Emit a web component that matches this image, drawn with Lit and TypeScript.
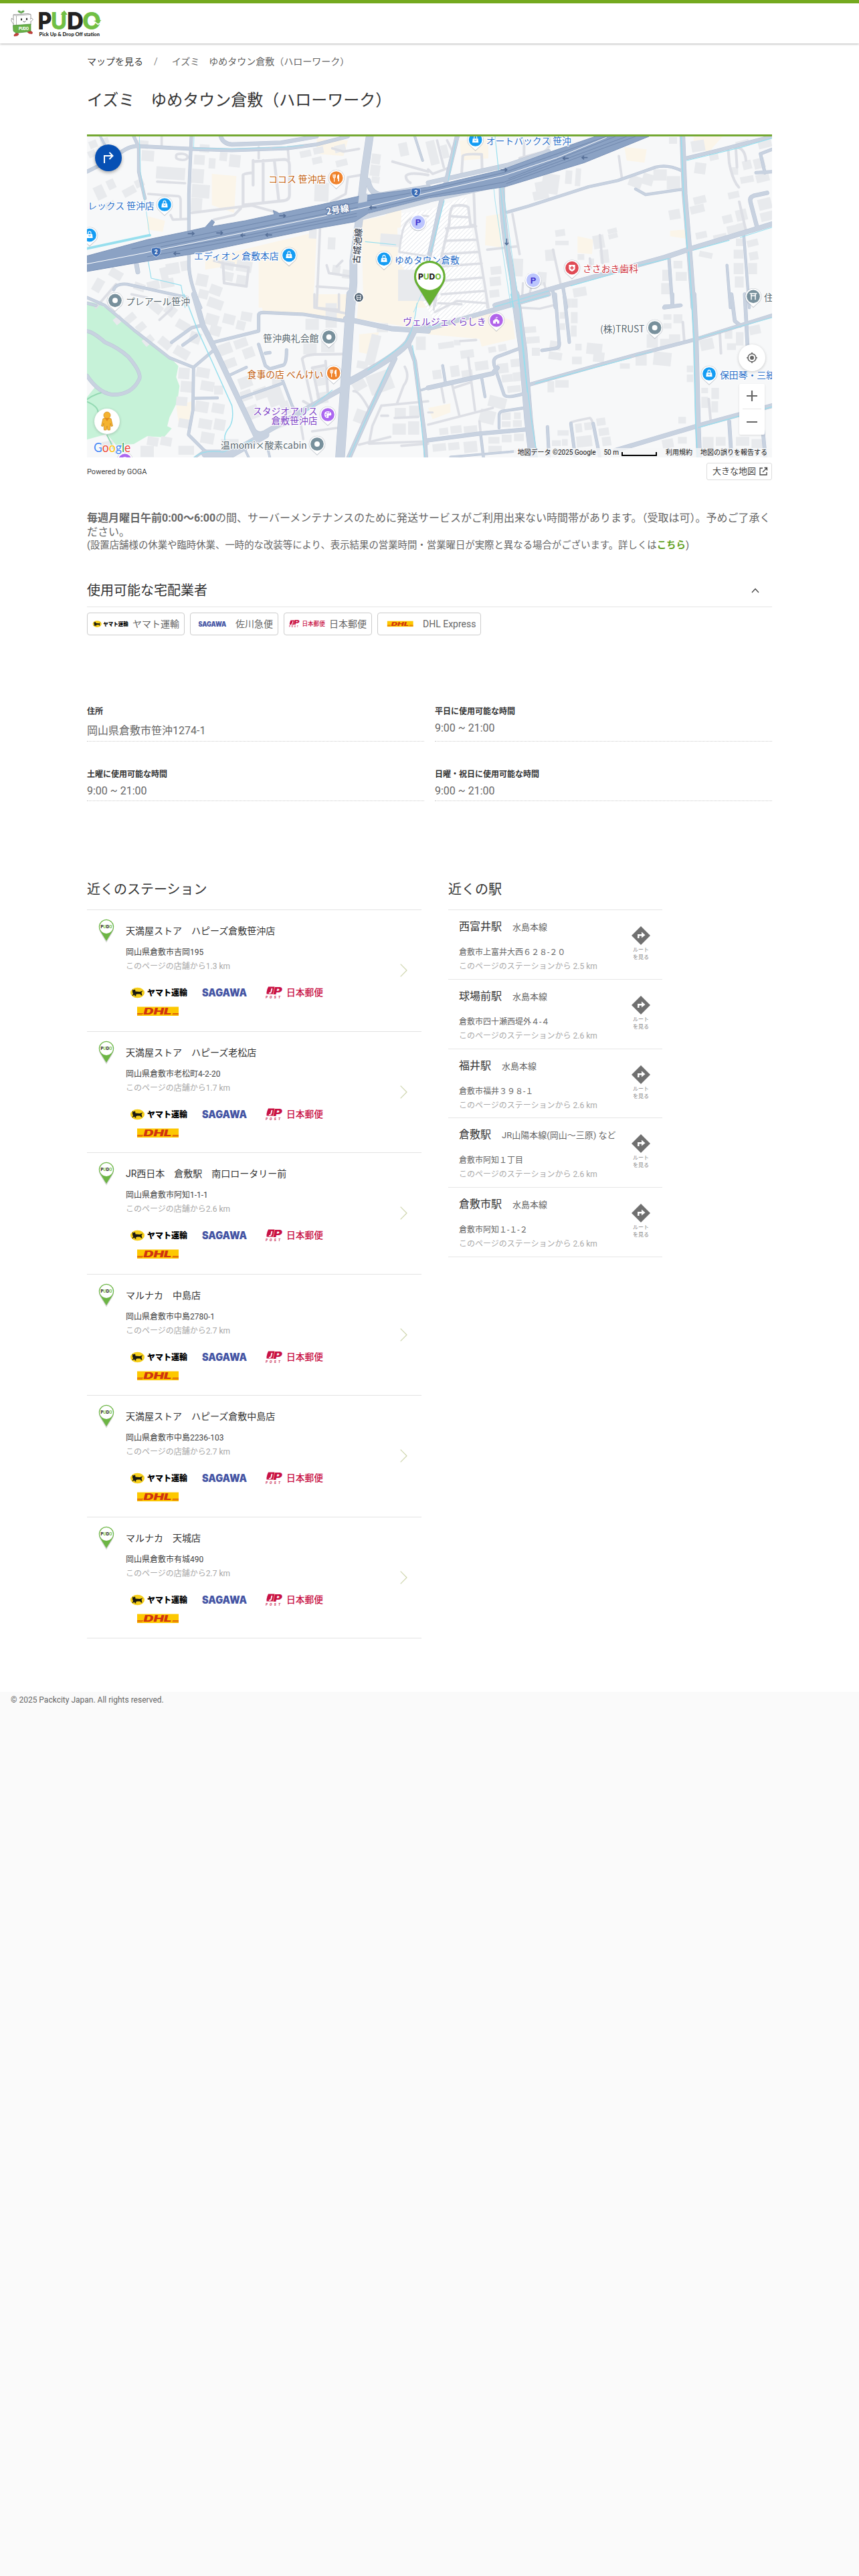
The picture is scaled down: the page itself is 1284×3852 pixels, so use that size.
import { LitElement, html, svg, css } from 'lit';
import { customElement, property } from 'lit/decorators.js';

const JP_FONT = css`Roboto, "Noto Sans CJK JP", sans-serif`;

// ---------------------------------------------------------------- data

const stores = [
    { name: '天満屋ストア　ハピーズ倉敷笹沖店', address: '岡山県倉敷市吉岡195', km: '1.3' },
    { name: '天満屋ストア　ハピーズ老松店', address: '岡山県倉敷市老松町4-2-20', km: '1.7' },
    { name: 'JR西日本　倉敷駅　南口ロータリー前', address: '岡山県倉敷市阿知1-1-1', km: '2.6' },
    { name: 'マルナカ　中島店', address: '岡山県倉敷市中島2780-1', km: '2.7' },
    { name: '天満屋ストア　ハピーズ倉敷中島店', address: '岡山県倉敷市中島2236-103', km: '2.7' },
    { name: 'マルナカ　天城店', address: '岡山県倉敷市有城490', km: '2.7' },
];

const trains = [
    { name: '西富井駅', line: '水島本線', address: '倉敷市上富井大西６２８-２０', km: '2.5' },
    { name: '球場前駅', line: '水島本線', address: '倉敷市四十瀬西堤外４-４', km: '2.6' },
    { name: '福井駅', line: '水島本線', address: '倉敷市福井３９８-１', km: '2.6' },
    { name: '倉敷駅', line: 'JR山陽本線(岡山～三原) など', address: '倉敷市阿知１丁目', km: '2.6' },
    { name: '倉敷市駅', line: '水島本線', address: '倉敷市阿知１-１-２', km: '2.6' },
];

const carriers = [
    { id: 'yamato', label: 'ヤマト運輸' },
    { id: 'sagawa', label: '佐川急便' },
    { id: 'jp', label: '日本郵便' },
    { id: 'dhl', label: 'DHL Express' },
];

// map tiles: every tile has its own origin, paths are [width, d]
// buildings are [x, y, w, h, angle]
type Tile = {
    dx: number;
    dy: number;
    areas: string[];
    buildings: number[][];
    lanes: [number, string][];
    roads: [number, string][];
    water: [number, string][];
};

const tiles: Tile[] = [
    {
        dx: -30,
        dy: -42,
        areas: [
            'M590 210L700 220L690 385L590 350Z',
            'M560 590L1060 470L1050 700L1040 810L800 810L800 600L560 640Z',
            'M1260 420L1420 385L1425 580L1560 600L1560 810L1270 810Z',
            'M1060 50L1200 60L1180 130L1060 120Z',
            'M300 400L380 420L370 470L300 460Z',
            'M1370 390L1440 370L1440 450L1370 460Z',
        ],
        buildings: [
            [340, 180, 130, 55, 4], [255, 60, 50, 36, 5], [275, 105, 56, 48, 4], [510, 125, 48, 44, 4],
            [535, 78, 44, 36, 4], [576, 140, 30, 46, 4], [500, 188, 54, 64, 4], [500, 258, 80, 60, 4],
            [496, 318, 50, 60, 4], [625, 112, 34, 40, 6], [668, 124, 50, 56, 6], [66, 262, 44, 62, -25],
            [120, 235, 36, 44, -25], [190, 270, 60, 36, -28], [245, 235, 40, 34, -24], [110, 335, 46, 30, -25],
            [40, 60, 36, 34, -22], [90, 50, 38, 26, -20], [35, 105, 34, 30, -25], [1050, 250, 64, 84, 2],
            [985, 105, 50, 30, -12], [1045, 90, 46, 30, -12], [1040, 135, 44, 30, -12], [1140, 80, 50, 32, -14],
            [1146, 146, 52, 30, -14], [1306, 120, 40, 46, 8], [1300, 170, 44, 50, 8], [1306, 222, 36, 30, 8],
            [1430, 70, 40, 60, -12], [1345, 480, 90, 56, 4], [1425, 640, 130, 140, 0], [385, 610, 60, 50, -10],
            [450, 600, 44, 44, -10], [360, 630, 32, 60, -14], [300, 690, 56, 40, -14], [360, 680, 60, 40, -10],
            [520, 660, 52, 54, 12], [580, 710, 54, 44, 20], [530, 730, 44, 40, 14], [630, 600, 60, 40, 12],
            [700, 600, 70, 50, 10], [640, 650, 46, 40, 12], [700, 665, 46, 44, 10], [390, 760, 50, 34, 6],
            [240, 700, 50, 34, 20], [130, 640, 60, 40, 30], [60, 680, 40, 60, 30], [1110, 495, 34, 54, 3],
            [1026, 450, 34, 50, 3], [1130, 620, 36, 40, 8], [1175, 640, 40, 40, 8],
        ],
        lanes: [
            [13, 'M775 150V260M775 155L915 145Q938 145 938 170V305Q938 325 915 330L730 350V215Q730 208 775 205M820 150V335M870 148L890 330'],
            [11, 'M430 130Q428 118 460 120Q485 124 480 140Q470 152 440 145Q428 142 430 130'],
            [11, 'M305 300L440 310Q450 312 450 330V410M480 412L415 415L405 395'],
            [12, 'M500 385L700 360L770 352L880 382M600 415L690 395L720 365'],
            [11, 'M345 245L470 252'],
            [11, 'M1125 335L1190 300L1200 225L1260 215M1130 95L1180 110L1250 98M800 90V140M930 90L935 145'],
            [12, 'M640 610L645 700L745 715L755 630L640 612'],
            [11, 'M1075 455L1060 810M1105 620L1115 655L1210 670M1150 625L1175 600M1060 715L1200 725'],
            [12, 'M1400 155L1560 200M1480 250Q1460 240 1460 220Q1470 200 1560 215'],
            [11, 'M160 705L70 810M600 600L640 610M365 42V90'],
            [9, 'M1440 500Q1450 380 1560 400M1440 490L1430 560L1560 580'],
        ],
        roads: [
            [16, 'M30 200L150 140Q200 90 250 85L500 98L680 104L930 95L1060 78L1200 42'],
            [18, 'M630 42Q640 75 680 78L900 70L1060 42'],
            [14, 'M240 42L262 90V200L290 320'],
            [14, 'M498 42L487 300V620Q490 700 540 810'],
            [10, 'M90 42L110 80'],
            [34, 'M1298 42L1275 200L1250 420L1225 600L1225 700L1215 810'],
            [24, 'M1560 270L1350 305Q1300 300 1290 240'],
            [20, 'M1250 410L1560 330'],
            [20, 'M250 605L258 650'],
            [11, 'M1500 42L1535 150'],
            [13, 'M150 730Q160 700 210 705L480 765M30 790L70 800'],
        ],
        water: [
            [3, 'M265 42L270 200L312 490'],
            [12, 'M30 545L312 485'],
            [4, 'M305 605L318 678L452 710L470 810'],
            [3, 'M510 42L508 95L680 98L850 92M860 94L1000 82'],
            [4, 'M1278 514L1415 528'],
        ],
    },
    {
        dx: 1530,
        dy: -42,
        areas: [
            'M140 60L270 50L270 140L150 150Z',
            'M260 400L320 390L330 540L255 530Z',
            'M670 490L740 505L735 570L670 565Z',
            'M1190 42L1320 42L1260 110L1190 100Z',
            'M880 90L980 100L970 160L890 150Z',
            'M1085 465L1150 460L1155 500L1085 490Z',
            'M0 620L140 600L150 810L0 810Z',
        ],
        buildings: [
            [510, 210, 76, 90, 8], [470, 285, 70, 40, -12], [615, 195, 30, 60, 4], [660, 185, 24, 80, 4],
            [480, 245, 50, 40, -10], [1180, 60, 60, 50, -10], [1080, 45, 36, 30, 0], [1195, 160, 50, 50, 8],
            [1260, 105, 40, 44, -12], [1190, 310, 56, 34, -14], [1175, 350, 64, 36, -14], [1080, 370, 50, 44, -10],
            [1340, 440, 60, 36, -12], [1280, 480, 60, 36, -12], [1200, 470, 50, 30, -12], [1215, 560, 60, 26, 12],
            [1320, 395, 44, 36, -14], [1380, 370, 50, 50, -14], [1385, 430, 40, 40, -14], [1345, 290, 50, 30, -12],
            [1360, 180, 30, 34, 0], [1400, 220, 60, 30, -10], [1470, 210, 60, 36, -14], [1460, 140, 50, 46, -14],
            [1410, 150, 40, 40, -14], [1480, 320, 60, 50, -14], [1490, 380, 60, 40, -14], [1480, 60, 60, 34, -14],
            [1380, 60, 60, 30, -14], [570, 460, 44, 30, -8], [570, 510, 60, 20, 0], [525, 550, 44, 50, -4],
            [805, 455, 42, 22, -14], [808, 478, 42, 22, -14], [740, 485, 50, 60, -10], [770, 550, 40, 60, -6],
            [900, 220, 60, 50, 20], [960, 210, 50, 50, 16], [1010, 190, 60, 50, 0], [1070, 220, 60, 60, 0],
            [375, 590, 50, 80, 2], [280, 625, 48, 36, -6], [276, 672, 50, 40, -6], [275, 730, 44, 34, -6],
            [450, 660, 34, 60, 4], [490, 650, 40, 60, 4], [650, 720, 60, 40, -10], [1050, 640, 40, 50, 0],
            [1100, 600, 40, 34, 0], [1110, 650, 50, 40, 0], [1045, 700, 40, 50, 0], [1380, 500, 40, 34, 0],
            [1430, 505, 50, 30, -14], [1370, 550, 44, 40, 0], [1440, 560, 40, 36, -10], [1370, 610, 44, 50, 0],
            [1435, 610, 40, 50, 0], [1375, 670, 40, 50, 0], [0, 60, 40, 110, -14], [60, 80, 30, 60, -14],
            [670, 570, 30, 26, 0], [720, 590, 24, 30, 0], [610, 770, 30, 40, 0],
        ],
        lanes: [
            [12, 'M150 210L155 130Q160 118 240 122L242 190M430 60L430 140M540 42Q555 90 520 110L410 140'],
            [12, 'M205 300L210 440L190 440L180 360Q160 345 110 355Q95 380 95 430L60 580L30 800'],
            [11, 'M100 400L185 405M80 455L215 445M75 510L220 505M65 570L230 560M55 625L240 612M60 690L245 675M60 750L255 735M210 440L270 810'],
            [11, 'M378 390L410 570M265 550L400 535'],
            [11, 'M855 130L868 225M560 550L595 710M770 485L782 610M725 590L730 630'],
            [12, 'M1345 95L1350 160Q1365 240 1393 270M1395 335L1425 465M1375 90Q1420 90 1425 150M1380 100L1385 180'],
            [11, 'M0 190L20 210L100 180M40 60L70 180M85 60L110 110'],
            [10, 'M420 790L425 700M520 700L530 740M455 745L470 690'],
        ],
        roads: [
            [20, 'M130 42L60 330L0 600'],
            [20, 'M0 250L360 170L540 110'],
            [18, 'M0 330L310 262'],
            [26, 'M330 262Q330 380 350 520L400 810'],
            [13, 'M355 382L450 355L720 268L850 240L1020 180Q1080 165 1145 200'],
            [12, 'M930 278L975 303L1150 278'],
            [24, 'M1140 42L1150 300L1170 540L1190 810'],
            [16, 'M1155 140L1300 105L1542 42'],
            [22, 'M1542 435L1460 460L1170 548L1060 585L600 712L300 800'],
            [14, 'M1490 120L1542 100M1490 120L1510 205M1470 205L1542 200'],
            [18, 'M1520 295L1460 308Q1440 315 1445 335L1475 450'],
            [14, 'M560 740L570 810M605 720L620 810M1080 590L1095 800'],
            [12, 'M1415 480L1440 810M1340 620L1355 810M1060 803L1135 800'],
        ],
        water: [
            [4, 'M300 42L380 810'],
            [3, 'M335 270L408 810'],
            [3, 'M288 210L300 330L372 810'],
            [5, 'M1135 42L1145 300L1162 545M1168 560L1185 810'],
            [4, 'M1160 150L1400 92L1542 50'],
            [4, 'M300 806L540 735M640 712L860 650M930 625L1080 590M1190 552L1350 508M1400 495L1542 450'],
            [4, 'M125 60L90 240M72 330L12 560'],
        ],
    },
    {
        dx: -30,
        dy: 708,
        areas: [
            'M800 0L1200 0L1190 110L820 80Z',
            'M1250 0L1510 0L1490 150L1240 110Z',
            'M1250 180L1340 170L1300 270L1250 260Z',
            'M430 500L500 480L490 570L440 570Z',
        ],
        buildings: [
            [200, 90, 50, 34, -40], [150, 100, 40, 30, -40], [250, 130, 44, 34, -40], [310, 40, 60, 40, 40],
            [380, 50, 50, 46, 40], [280, 190, 50, 34, -40], [350, 200, 60, 40, 40], [430, 120, 60, 40, 30],
            [420, 240, 70, 44, 30], [490, 170, 50, 50, 20], [560, 90, 60, 50, 16], [580, 140, 50, 46, 16],
            [640, 90, 54, 44, 14], [700, 120, 40, 40, 14], [570, 20, 70, 44, 20], [720, 80, 50, 40, 10],
            [690, 200, 60, 40, -20], [620, 220, 60, 50, -20], [730, 240, 50, 46, -20], [640, 290, 60, 40, -20],
            [520, 330, 60, 44, 10], [540, 390, 60, 44, 10], [600, 410, 40, 40, 0], [515, 480, 60, 50, 10],
            [590, 490, 56, 44, 10], [440, 330, 50, 50, 5], [450, 390, 54, 50, 5], [430, 460, 50, 40, 5],
            [440, 560, 60, 40, 10], [530, 560, 60, 44, 10], [600, 560, 50, 50, 10], [540, 620, 60, 50, 10],
            [720, 430, 50, 46, -20], [780, 420, 60, 50, -20], [840, 420, 70, 80, -20], [710, 370, 60, 50, -20],
            [740, 500, 60, 60, -20], [900, 480, 40, 60, -20], [860, 360, 40, 50, 0], [1010, 110, 60, 50, 0],
            [1100, 40, 50, 110, 0], [1000, 220, 60, 50, 0], [1080, 210, 60, 50, 0], [1050, 320, 50, 90, -10],
            [1060, 440, 50, 50, -10], [1290, 180, 44, 140, 14], [1240, 300, 50, 34, 10], [1220, 380, 60, 50, -30],
            [1290, 350, 110, 90, -20], [1230, 520, 60, 60, 20], [1400, 580, 60, 50, 0], [1410, 510, 50, 40, 0],
            [1475, 500, 50, 50, 0], [1470, 570, 50, 60, 0], [1505, 190, 44, 60, 0], [1330, 130, 50, 40, 0],
            [300, 640, 50, 40, 10], [360, 640, 50, 40, 10], [270, 680, 60, 50, 0], [440, 680, 70, 40, 0],
            [90, 660, 60, 40, -10], [630, 650, 80, 40, 0], [860, 560, 70, 40, -20],
        ],
        lanes: [
            [12, 'M1000 480L1035 500M995 290Q1000 275 1050 270L1180 268M995 290L1040 490M1040 330L1100 318M1040 330L1070 470M1100 300L1110 440'],
            [11, 'M1455 325Q1480 370 1450 410L1420 490M1350 500L1560 480M1350 500L1310 590L1295 670L1560 660M1350 545H1380M1410 555L1515 550M1440 680L1560 670M1250 675L1390 640'],
            [11, 'M1225 435Q1250 430 1300 525M1050 60L1160 70M1050 0V60L1190 85M1160 0V75'],
            [11, 'M415 40L410 65L355 115M230 0L300 15M960 550L985 560L1000 650M1040 615L1150 600'],
        ],
        roads: [
            [24, 'M510 0L550 140L610 260L700 450L790 640'],
            [14, 'M600 215L800 165V95Q800 82 820 82L1000 90L1190 120'],
            [13, 'M30 15L110 50L240 160L400 285L508 328L600 250'],
            [13, 'M508 328L505 520L485 630L560 705'],
            [14, 'M410 215L500 150L545 140M460 228L520 185'],
            [12, 'M665 365L745 328M720 465L905 400M510 467L615 465'],
            [14, 'M800 225L830 320L850 335L910 318Q925 315 925 250M830 265L850 262'],
            [12, 'M905 380L950 500L985 560'],
            [42, 'M1215 0L1195 300L1165 732'],
            [22, 'M1190 110L1400 155L1560 165'],
            [30, 'M1560 150L1500 155L1470 215Q1420 280 1200 395'],
            [22, 'M1190 415L1020 510L830 620Q790 640 770 600'],
            [34, 'M560 715L680 715L830 630'],
            [22, 'M1410 290L1290 540L1205 732'],
            [18, 'M1470 215L1500 300L1545 640L1550 732'],
            [16, 'M30 365Q80 440 140 450Q230 455 265 380Q275 350 215 280Q170 240 110 215Q60 170 30 165'],
            [10, 'M740 700L755 732M840 690L850 732M1530 430L1560 420M515 732L560 700'],
        ],
        water: [
            [5, 'M465 0L530 170L590 300L680 500Q690 560 670 595Q640 630 650 660'],
            [4, 'M510 732Q550 695 640 708L770 655M990 545L1130 430'],
            [4, 'M1510 40Q1490 210 1430 240Q1340 310 1290 340'],
            [4, 'M1490 230L1510 380L1535 640L1545 732M1380 330L1290 540L1205 732'],
            [3, 'M1530 0L1495 80'],
        ],
    },
    {
        dx: 1530,
        dy: 708,
        areas: [
            'M0 160L270 80L380 120L390 200L240 235L230 200L0 180Z',
            'M0 510L100 490L100 530L20 560Z',
        ],
        buildings: [
            [45, 215, 70, 28, -8], [115, 205, 30, 24, 0], [145, 250, 60, 36, -8], [270, 235, 34, 26, -10],
            [315, 225, 36, 30, -10], [430, 145, 54, 28, -4], [440, 190, 60, 30, -4], [465, 240, 36, 36, 0],
            [545, 210, 50, 40, 8], [540, 260, 60, 34, 8], [645, 280, 44, 34, 0], [660, 222, 28, 30, 0],
            [710, 220, 70, 50, 6], [740, 260, 50, 44, 6], [590, 80, 24, 30, 0], [590, 130, 24, 30, 0],
            [640, 20, 30, 40, 0], [640, 80, 30, 50, 0], [640, 140, 26, 50, 0], [980, 180, 50, 60, 0],
            [1010, 260, 80, 60, 6], [930, 270, 50, 50, 0], [1080, 180, 50, 50, 0], [1040, 200, 40, 40, 0],
            [1055, 90, 36, 24, 0], [1055, 130, 36, 24, 0], [1100, 90, 40, 40, 0], [1160, 320, 28, 30, 0],
            [1160, 360, 28, 34, 0], [1225, 420, 30, 24, 0], [1225, 460, 30, 50, 0], [1270, 420, 34, 50, 0],
            [1270, 480, 30, 50, 0], [1220, 200, 60, 50, -12], [1330, 160, 34, 40, 0], [1340, 220, 40, 30, 0],
            [1440, 140, 50, 40, -12], [1380, 170, 34, 60, 0], [310, 310, 50, 44, -6], [370, 290, 40, 36, -6],
            [330, 360, 50, 34, -6], [380, 350, 40, 40, -6], [355, 410, 60, 30, -6], [210, 300, 60, 40, -8],
            [150, 340, 50, 34, -8], [100, 320, 40, 50, -8], [20, 340, 40, 40, -8], [270, 460, 80, 50, 14],
            [230, 520, 70, 60, 14], [330, 530, 40, 34, 0], [385, 530, 30, 30, 0], [330, 570, 40, 26, 0],
            [380, 565, 40, 30, 0], [160, 590, 60, 34, -6], [100, 590, 50, 34, -6], [50, 600, 40, 30, -6],
            [20, 670, 60, 34, -6], [90, 665, 50, 34, -6], [160, 660, 60, 50, -6], [270, 640, 50, 30, 0],
            [330, 630, 44, 34, 0], [385, 625, 44, 34, 0], [270, 680, 60, 34, 0], [555, 655, 40, 26, 0],
            [600, 650, 26, 30, 0], [580, 610, 50, 24, 0], [660, 580, 30, 40, -6], [700, 575, 34, 34, -6],
            [665, 635, 70, 50, -6], [755, 555, 40, 34, -8], [765, 600, 46, 34, -8], [780, 640, 40, 40, -8],
            [1122, 550, 34, 30, 0], [1050, 650, 50, 40, -10], [1120, 640, 40, 30, 0], [1230, 640, 50, 50, 0],
            [1380, 640, 60, 40, 0], [1450, 650, 50, 40, 0], [1290, 640, 44, 40, 0], [860, 310, 44, 24, 0],
            [535, 390, 30, 50, 0], [570, 385, 60, 34, 0],
        ],
        lanes: [
            [11, 'M0 585L290 510M105 395L140 545M180 285L210 520M60 420L72 485M115 420L190 395'],
            [11, 'M230 570L235 620M640 575Q650 570 725 555Q735 560 740 590M145 210L215 205'],
            [12, 'M1142 125L1148 205M1308 175L1313 265M1258 470L1266 560'],
            [10, 'M30 80L130 30L260 40M45 40L150 45M410 60L500 65L560 50'],
            [9, 'M0 530H20M30 0L25 70M260 0L265 60'],
        ],
        roads: [
            [20, 'M0 155L380 45L540 0'],
            [38, 'M390 0L425 250L450 560L470 732'],
            [16, 'M445 408L750 322L930 272L1190 205L1542 95'],
            [20, 'M0 420L290 355L310 330'],
            [14, 'M405 245L310 280Q285 290 300 330L340 450Q350 470 430 445'],
            [14, 'M570 0L588 225Q588 240 570 243L510 252M610 0L633 215'],
            [18, 'M0 655L230 625L460 605'],
            [12, 'M430 510L330 525Q318 530 318 545V600M240 375L255 460M65 320L78 400M235 625L248 732'],
            [14, 'M535 595L542 732M640 580L660 732M740 580L770 732'],
            [20, 'M840 700L1210 590L1542 500'],
            [24, 'M1190 0L1200 200L1210 600L1215 732'],
            [16, 'M1360 0L1375 120L1400 140M1095 0V50M1058 60L1130 50M1420 0L1432 230'],
            [16, 'M1350 570L1360 732M1500 600L1512 732'],
            [10, 'M100 730L390 705'],
        ],
        water: [
            [4, 'M405 0L440 380L465 580L490 732M370 0L385 60'],
            [4, 'M480 400L910 285M1215 195L1542 105M1212 598L1542 505'],
            [5, 'M1180 0L1192 200L1200 585L1208 732'],
            [4, 'M400 42L540 4M410 120L445 440'],
            [3, 'M0 150L60 135M930 275L1005 258'],
        ],
    },
];

type Place = { x: number; y: number; kind: string; lines?: string[]; side?: 'l' | 'r' };

const places: Place[] = [
    { x: 1118, y: 186, kind: 'food', lines: ['ココス 笹沖店'], side: 'l' },
    { x: 348, y: 306, kind: 'shop', lines: ['レックス 笹沖店'], side: 'l' },
    { x: 12, y: 443, kind: 'shop' },
    { x: 906, y: 533, kind: 'shop', lines: ['エディオン 倉敷本店'], side: 'l' },
    { x: 1332, y: 550, kind: 'shop', lines: ['ゆめタウン倉敷'], side: 'r' },
    { x: 1742, y: 15, kind: 'shop', lines: ['オートバックス 笹沖'], side: 'r' },
    { x: 2175, y: 590, kind: 'health', lines: ['ささおき歯科'], side: 'r' },
    { x: 2988, y: 718, kind: 'shrine', lines: ['住'], side: 'r' },
    { x: 126, y: 736, kind: 'dot', lines: ['プレアール笹沖'], side: 'r' },
    { x: 1085, y: 900, kind: 'dot', lines: ['笹沖典礼会館'], side: 'l' },
    { x: 1106, y: 1062, kind: 'food', lines: ['食事の店 べんけい'], side: 'l' },
    { x: 1080, y: 1248, kind: 'art', lines: ['スタジオアリス', '倉敷笹沖店'], side: 'l' },
    { x: 1032, y: 1380, kind: 'dot', lines: ['温momi×酸素cabin'], side: 'l' },
    { x: 1836, y: 825, kind: 'castle', lines: ['ヴェルジェくらしき'], side: 'l' },
    { x: 2546, y: 858, kind: 'dot', lines: ['(株)TRUST'], side: 'l' },
    { x: 2790, y: 1065, kind: 'shop', lines: ['保田琴・三絃'], side: 'r' },
    { x: 170, y: 1453, kind: 'art' },
];

const kindColors: Record<string, [string, string]> = {
    food: ['#f0832c', '#c2600f'],
    shop: ['#149cf3', '#2b70c9'],
    health: ['#e04b55', '#d03742'],
    shrine: ['#78909c', '#56666e'],
    dot: ['#78909c', '#56666e'],
    art: ['#ac68f0', '#7b3fc4'],
    castle: ['#b164ea', '#7b3fc4'],
};

// ---------------------------------------------------------------- map

@customElement('station-map')
export class StationMap extends LitElement {
    static styles = css`
        :host {
            display: block;
            position: relative;
            height: 480px;
            border-top: 3px solid #74a832;
            overflow: hidden;
            font-family: ${JP_FONT};
        }
        .canvas {
            display: block;
            width: 1024px;
            height: 480px;
        }
        .label {
            font-family: "Noto Sans CJK JP", sans-serif;
            font-size: 41.5px;
            paint-order: stroke;
            stroke: #fff;
            stroke-width: 7px;
            stroke-linejoin: round;
        }
        .road-name {
            font-family: "Noto Sans CJK JP", sans-serif;
            font-size: 40px;
            font-weight: 500;
            paint-order: stroke;
            stroke-width: 8px;
            stroke-linejoin: round;
        }
        .road-name.highway {
            font-weight: 700;
        }
        .parking {
            font-family: Roboto, sans-serif;
            font-size: 40px;
            font-weight: 700;
        }
        .parking.shield {
            font-size: 26px;
        }
        .pin-text {
            font-family: Inter, sans-serif;
            font-weight: 800;
        }
        .google {
            font-family: Lato, sans-serif;
            font-size: 56px;
            paint-order: stroke;
            stroke: #fff;
            stroke-width: 6px;
            stroke-linejoin: round;
        }
        .round {
            position: absolute;
            width: 40px;
            height: 40px;
            border-radius: 50%;
            background: #fff;
            box-shadow: 0 1px 4px rgba(0, 0, 0, 0.2);
        }
        .round svg {
            display: block;
            width: 100%;
            height: 100%;
        }
        .route {
            left: 12px;
            top: 12px;
            background: #0750b4;
            box-shadow: 0 2px 5px rgba(0, 0, 0, 0.35);
        }
        .pegman {
            left: 11px;
            bottom: 35px;
            width: 38px;
            height: 38px;
        }
        .locate {
            right: 10px;
            top: 311px;
        }
        .zoom {
            position: absolute;
            right: 11px;
            top: 370px;
            width: 38px;
            height: 76px;
            border-radius: 2px;
            background: #fff;
            box-shadow: 0 1px 3px rgba(0, 0, 0, 0.12);
        }
        .legal {
            position: absolute;
            right: 0;
            bottom: 0;
            display: flex;
            align-items: center;
            height: 14px;
            padding: 0 7px 0 6px;
            background: rgba(245, 246, 248, 0.8);
            color: #111;
            font-size: 10px;
            line-height: 14px;
            white-space: nowrap;
        }
        .scale {
            width: 49px;
            height: 4px;
            margin: 3px 13px 0 4px;
            border: 2px solid #000;
            border-top: none;
        }
        .gap {
            margin-right: 12px;
        }
    `;

    glyph(kind: string) {
        switch (kind) {
            case 'food':
                return svg`<path d="M-14 -16v10q0 6 5 7v16M-9 -16v14M-4 -16v10q0 6-5 7" fill="none" stroke="#fff" stroke-width="3.5"/>
                    <path d="M4 -8q2-9 9-8v32h-5v-12h-4z" fill="#fff"/>`;
            case 'shop':
                return svg`<path d="M-12 -5h24l2 18h-28z" fill="#fff"/>
                    <path d="M-6 -5v-5q0-7 6-7t6 7v5" fill="none" stroke="#fff" stroke-width="3.5"/>
                    <path d="M-5 1q5 7 10 0" fill="none" stroke="#149cf3" stroke-width="3"/>`;
            case 'health':
                return svg`<path d="M-14 -14h28v16q0 8-14 14q-14-6-14-14z" fill="#fff"/>
                    <path d="M0 -9v17M-8 0h16" stroke="#e04b55" stroke-width="5"/>`;
            case 'shrine':
                return svg`<path d="M-16 -13h32M-12 -3h24M-9 -12v27M9 -12v27" stroke="#fff" stroke-width="4.5"/>`;
            case 'art':
                return svg`<path d="M-15 2q-2-16 14-17q16 0 17 14q0 6-8 5q-6 0-4 7q1 5-6 4q-12-2-13-13z" fill="#fff"/>
                    <g fill="#ac68f0"><circle cx="-8" cy="-1" r="3"/><circle cx="-3" cy="-8" r="3"/><circle cx="6" cy="-8" r="3"/><circle cx="-6" cy="7" r="2.6"/></g>`;
            case 'castle':
                return svg`<path d="M-15 14v-13h4l4-6h5v-9h10l-4 3h-4v6h5l4 6h4v13h-10v-8h-6v8z" fill="#fff"/>`;
            default:
                return svg`<circle r="12" fill="#fff"/>`;
        }
    }

    place(p: Place) {
        const [bg, fg] = kindColors[p.kind];
        const lines = p.lines ?? [];
        const left = p.side === 'l';
        return svg`
            <g transform=${`translate(${p.x} ${p.y})`}>
                <path d="M0 51L-22 30A37 37 0 1 1 22 30Z" fill="#5f6b7a" opacity=".35"/>
                <path d="M0 47L-22 27A35 35 0 1 1 22 27Z" fill="#fff"/>
                <circle r="29.5" fill=${bg}/>
                ${this.glyph(p.kind)}
                ${lines.map((t, i) => svg`<text class="label" fill=${fg} x=${left ? -46 : 48}
                    y=${20 + (i - (lines.length - 1) / 2) * 43} text-anchor=${left ? 'end' : 'start'}>${t}</text>`)}
            </g>`;
    }

    layer(draw: (t: Tile) => unknown) {
        return tiles.map((t) => svg`<g transform=${`translate(${t.dx} ${t.dy})`}>${draw(t)}</g>`);
    }

    strokes(list: [number, string][], color: string, extra = 0) {
        return list.map(([w, d]) => svg`<path d=${d} stroke=${color} stroke-width=${w + extra}/>`);
    }

    render() {
        return html`
            <svg class="canvas" viewBox="0 0 3072 1440">
                <defs>
                    <pattern id="hatch" width="14" height="14" patternUnits="userSpaceOnUse" patternTransform="rotate(-45)">
                        <path d="M0 7H14" stroke="#dde1e7" stroke-width="2"/>
                    </pattern>
                </defs>
                <rect width="3072" height="1440" fill="#f7f8f9"/>
                <path d="M0 740Q60 745 110 790L380 1000L410 1030L400 1080L415 1120L405 1190L370 1260L360 1300L380 1310L345 1350L270 1345L210 1380L130 1385L90 1335L0 1360V1170L40 1120L0 1080Z" fill="#c6f2d8"/>
                ${this.layer((t) => t.areas.map((d) => svg`<path d=${d} fill="#fbf5e9"/>`))}
                <path d="M1410 345L1530 330L1700 270L1790 780L1560 830L1400 560Z" fill="#fff"/>
                <path d="M1410 345L1530 330L1700 270L1790 780L1560 830L1400 560Z" fill="url(#hatch)"/>
                ${this.layer((t) => t.buildings.map(([x, y, w, h, a]) => svg`<rect x=${x} y=${y} width=${w} height=${h}
                    fill="#e8eaed" transform=${`rotate(${a} ${x + w / 2} ${y + h / 2})`}/>`))}
                <g fill="none" stroke-linecap="round" stroke-linejoin="round">
                    <path d="M0 1180Q40 1150 90 1145M0 1190Q50 1210 50 1240M90 1340L130 1420" stroke="#93d9b2" stroke-width="6"/>
                    ${this.layer((t) => this.strokes(t.lanes, '#dddfe5'))}
                    ${this.layer((t) => this.strokes(t.roads, '#b9c4d6', 1))}
                    ${this.layer((t) => this.strokes(t.roads, '#c8d2e0', -2))}
                    ${this.layer((t) => this.strokes(t.water, '#97dfee', -0.5))}
                </g>
                <path d="M0 536L270 463L450 426L530 408L560 374L572 384L560 404L710 378L840 350L835 332L862 345L1030 310L1220 268L1530 228L1860 150L2070 72L2280 0H2520L2230 118L1875 226L1530 276L1260 345L1200 383L1030 413L710 478L470 528L230 566L0 606Z"
                    fill="#8ba2c4" stroke="#7b93b8" stroke-width="3"/>
                <g fill="none" stroke="#7189ae" stroke-width="3">
                    <path d="M200 505L710 400L1220 295L1530 240L1870 162L2330 0"/>
                    <path d="M330 495L710 420L1215 318"/>
                    <path d="M270 540L710 458L1210 358M1260 330L1530 268L1870 205L2420 0"/>
                    <path d="M330 510L710 445L1210 345M1890 190L2370 0M1880 212L2460 0"/>
                </g>
                <path d="M1221 262L1258 256L1256 292L1216 300Z" fill="#c8d2e0"/>
                <path d="M0 572L230 528L710 430L1220 325L1530 253L1870 175L2110 95L2330 4" fill="none" stroke="#fff" stroke-width="3"/>
                <g fill="none" stroke="#566f97" stroke-width="5">
                    <path d="M452 436h28m-9-8l9 8l-9 8M580 433h28m-9-8l9 8l-9 8M862 356h28m-9-8l9 8l-9 8M710 443h-20m9-8l-9 8l9 8M830 442h-28m9-8l-9 8l9 8M418 525h-28m9-8l-9 8l9 8M1298 319h-30m9-8l-9 8l9 8M1855 150h28m-9-8l9 8l-9 8M2160 98h-25m9-8l-9 8l9 8M2245 95h-25m9-8l-9 8l9 8M1882 458v28m-8-9l8 9l8-9"/>
                </g>
                <text class="road-name highway" transform="translate(1075 351) rotate(-9)" fill="#fff" stroke="#5f7aa8">2号線</text>
                <text class="road-name" transform="translate(1222 572) rotate(-86)" fill="#3c4654" stroke="#fff">古城池線</text>
                ${[[310, 518], [1475, 251]].map(([x, y]) => svg`
                    <g transform=${`translate(${x} ${y})`}>
                        <path d="M-20 -16Q0 -24 20 -16Q26 14 0 23Q-26 14 -20 -16Z" fill="#3a6bb3" stroke="#e9effa" stroke-width="2"/>
                        <text class="parking shield" x="0" y="10" text-anchor="middle" fill="#fff">2</text>
                    </g>`)}
                <circle cx="1219" cy="722" r="21" fill="#46596b" stroke="#fff" stroke-width="4"/>
                <path d="M1210 712h18v18h-18zM1210 722h18M1213 730v5M1225 730v5" fill="none" stroke="#fff" stroke-width="3"/>
                ${[[1485, 385], [2001, 645]].map(([x, y]) => svg`
                    <circle cx=${x} cy=${y + 2} r="37" fill="#6c7687" opacity=".4"/>
                    <circle cx=${x} cy=${y} r="33" fill="#bcc5fd" stroke="#fff" stroke-width="5"/>
                    <text class="parking" x=${x} y=${y + 14} text-anchor="middle" fill="#4535cf">P</text>`)}
                ${places.map((p) => this.place(p))}
                <path d="M1537 766L1478 668A70 70 0 1 1 1596 668Z" fill="#5c6470" opacity=".3"/>
                <path d="M1537 760L1477 664A70 70 0 1 1 1597 664Z" fill="#66b032"/>
                <circle cx="1537" cy="628" r="61" fill="#fff"/>
                <text class="pin-text" x="1485" y="641" font-size="36" textLength="104" lengthAdjust="spacingAndGlyphs" fill="#222">P<tspan fill="#7ac143">U</tspan>D<tspan fill="#7ac143">O</tspan></text>
                <text class="google" x="30" y="1415" textLength="166" lengthAdjust="spacingAndGlyphs" fill="#4285f4">G<tspan fill="#ea4335">o</tspan><tspan fill="#fbbc04">o</tspan>g<tspan fill="#34a853">l</tspan><tspan fill="#ea4335">e</tspan></text>
            </svg>
            <div class="round route">
                <svg viewBox="0 0 40 40"><path d="M14 28V17H26M21.5 12L26.5 17L21.5 22" fill="none" stroke="#fff" stroke-width="2"/></svg>
            </div>
            <div class="round pegman">
                <svg viewBox="0 0 38 38">
                    <path d="M13 15Q19 12 25 15L27.5 26L25 26.500L24 22L23.500 32H20L19 26L18 32H14.500L14 22L13 26.500L10.500 26Z" fill="#f5b32f" stroke="#cf8a1b" stroke-width=".8"/>
                    <circle cx="19" cy="10" r="5" fill="#f5b32f" stroke="#cf8a1b" stroke-width=".8"/>
                    <path d="M15.500 14L19 19L22.500 14Z" fill="#e08a1e"/>
                </svg>
            </div>
            <div class="round locate">
                <svg viewBox="0 0 40 40">
                    <circle cx="20" cy="20" r="6" fill="none" stroke="#666" stroke-width="1.600"/>
                    <circle cx="20" cy="20" r="3" fill="#666"/>
                    <path d="M20 12V15M20 25V28M12 20H15M25 20H28" stroke="#666" stroke-width="1.600"/>
                </svg>
            </div>
            <div class="zoom">
                <svg viewBox="0 0 38 76" width="38" height="76">
                    <path d="M11 18H27M19 10V26M11 57H27" stroke="#666" stroke-width="2.200"/>
                    <path d="M5 37.500H33" stroke="#e6e6e6"/>
                </svg>
            </div>
            <div class="legal">
                <span class="gap">地図データ ©2025 Google</span>
                <span>50 m</span>
                <span class="scale"></span>
                <span class="gap">利用規約</span>
                <span>地図の誤りを報告する</span>
            </div>
        `;
    }
}

// ---------------------------------------------------------------- logos

@customElement('carrier-logo')
export class CarrierLogo extends LitElement {
    static styles = css`
        :host {
            display: block;
        }
        svg {
            display: block;
            width: 100%;
        }
        .jp {
            font-family: "Noto Sans CJK JP", sans-serif;
        }
        .heavy {
            font-family: Inter, "Liberation Sans", sans-serif;
            font-weight: 900;
        }
    `;

    @property() name = '';

    art() {
        switch (this.name) {
            case 'yamato':
                return svg`
                    <ellipse cx="11.500" cy="14.500" rx="10.500" ry="7.800" fill="#f6cf1b"/>
                    <path d="M4 9.500L5.500 10.500L8 9.500L8.500 12.500L15 13L19.500 11.500L17.500 14L18.500 18.500H17L15.500 16.500L11 16.500L9 17.500L9.500 19.500H8L6.500 17.500L4.500 19H3.500L5 16L4 13.500Z" fill="#1b1a12"/>
                    <text class="jp" x="26" y="19" font-size="12.500" font-weight="900" textLength="60" lengthAdjust="spacingAndGlyphs" fill="#000">ヤマト運輸</text>`;
            case 'sagawa':
                return svg`<text class="heavy" x="7" y="20" font-size="15.500" textLength="67" lengthAdjust="spacingAndGlyphs" fill="#4555a4">SAGAWA</text>`;
            case 'jp':
                return svg`
                    <path d="M4 5.500H13.500L11 16.500H1.500V13.500Q2 9 4 5.500Z" fill="#c81144"/>
                    <path d="M9.500 8L8.300 13Q7.500 15.500 5 14.500" fill="none" stroke="#fff" stroke-width="1.800"/>
                    <text class="heavy" x="11.500" y="16.500" font-size="15" font-style="italic" fill="#c81144" textLength="13" lengthAdjust="spacingAndGlyphs">P</text>
                    <text class="heavy" x="0" y="22.500" font-size="4.500" textLength="22" font-style="italic" fill="#d04a6b">POST</text>
                    <text class="jp" x="31" y="19" font-size="14" font-weight="500" textLength="55" lengthAdjust="spacingAndGlyphs" fill="#c81144">日本郵便</text>`;
            default:
                return svg`
                    <rect x="11" y="7.500" width="62" height="13.500" fill="#fdc800"/>
                    <path d="M11 17.500H20M11 19H19M64 17.500H73M63.500 19H73" stroke="#d4380d" stroke-width=".8"/>
                    <text class="heavy" x="20.500" y="18.800" font-size="12.500" font-style="italic" textLength="42" lengthAdjust="spacingAndGlyphs" fill="#d0340f">DHL</text>`;
        }
    }

    render() {
        return html`<svg viewBox="0 0 96 28">${this.art()}</svg>`;
    }
}

const pinIcon = html`
    <svg class="pin" viewBox="0 0 26 38">
        <path d="M13 34L4 19A11 11 0 1 1 22 19Z" fill="#555" opacity=".25" transform="translate(0 1.500)"/>
        <path d="M13 33L3.600 18A11.200 11.200 0 1 1 22.400 18Z" fill="#6cb544"/>
        <circle cx="13" cy="12" r="10" fill="#fff"/>
        <text x="4.500" y="13.800" font-family="Inter, sans-serif" font-weight="800" font-size="5.500" textLength="17" lengthAdjust="spacingAndGlyphs" fill="#222">P<tspan fill="#7ac143">U</tspan>D<tspan fill="#7ac143">O</tspan></text>
    </svg>
`;

const brand = html`
    <svg class="brand" width="136" height="42" viewBox="0 0 136 42">
        <path d="M15.500 5Q11 5.500 11 2Q15 1.500 15.500 4.500Q16 1.500 20 2Q20 5.500 15.500 5V7.500" fill="#5fae46" stroke="#4a8f3c" stroke-width=".7"/>
        <path d="M4 8L26 6.500L30 7.500V23L4 24Z" fill="#fff" stroke="#888" stroke-width=".9"/>
        <path d="M4 8L8.500 9.500L30 7.500M8.500 9.500V24" fill="none" stroke="#999" stroke-width=".8"/>
        <path d="M3.500 24L30 22V33L8 35.500L4 32.500Z" fill="#68b045" stroke="#4a8f3c" stroke-width=".7"/>
        <path d="M4 22L0.800 17L1.500 13L4 16M29.500 19L33.500 15L31 13L29 15" fill="#fff" stroke="#888" stroke-width=".8"/>
        <ellipse cx="16" cy="15" rx="1.100" ry="1.700" fill="#222"/>
        <ellipse cx="24" cy="14.500" rx="1.100" ry="1.700" fill="#222"/>
        <path d="M18.500 18Q20.500 20 22.500 17.500" fill="none" stroke="#333" stroke-width=".8"/>
        <path d="M5 40Q4 37 9 35.500L12 36.500Q12 40 5 40ZM25 34L30 32.500Q34 34 32 36.500Q27 37 25 34Z" fill="#c9403a" stroke="#8d2b28" stroke-width=".5"/>
        <text x="12" y="30.500" font-family="Inter, sans-serif" font-weight="800" font-size="5.500" textLength="15" fill="#fff">PUDO</text>
        <g font-family="Inter, sans-serif" font-weight="800" font-size="36" fill="#222">
            <text x="40.500" y="30" textLength="21" lengthAdjust="spacingAndGlyphs">P</text>
            <text x="60" y="30" textLength="24" lengthAdjust="spacingAndGlyphs" fill="#71bf44">U</text>
            <text x="84" y="30" textLength="25" lengthAdjust="spacingAndGlyphs">D</text>
            <text x="107" y="30" textLength="28" lengthAdjust="spacingAndGlyphs" fill="#71bf44">O</text>
        </g>
        <path d="M74.500 8L80 1.500L85 8Z" fill="#71bf44"/>
        <path d="M124 17L130 21.500L135.500 16Z" fill="#71bf44"/>
        <path d="M125 18L130.500 22.500L134 20" fill="none" stroke="#fff" stroke-width="1.500"/>
        <text x="42.500" y="39.500" font-family="Lato, sans-serif" font-weight="900" font-size="7.500" textLength="90.500" lengthAdjust="spacingAndGlyphs" fill="#222">Pick Up &amp; Drop Off station</text>
    </svg>
`;

// ---------------------------------------------------------------- page

@customElement('app-root')
export class AppRoot extends LitElement {
    static styles = css`
        :host {
            display: block;
            min-height: 3852px;
            background: #fafafa;
            color: #333;
            font-family: ${JP_FONT};
        }
        .page {
            height: 2530px;
            box-sizing: border-box;
            background: #fff;
        }
        .header {
            height: 60px;
            padding-left: 16px;
            border-top: 5px solid #74a91f;
            box-shadow: 0 1px 3px rgba(0, 0, 0, 0.3);
        }
        .brand {
            display: block;
            padding-top: 9px;
        }
        .content {
            width: 1024px;
            margin: 0 auto;
        }
        .crumbs {
            display: flex;
            font-size: 14px;
            line-height: 54px;
            color: #666;
        }
        .crumbs .home {
            color: #3c3c3c;
        }
        .crumbs .sep {
            margin: 0 21px 0 16px;
            color: #888;
        }
        .title {
            margin: 0 0 20px;
            font-size: 24px;
            font-weight: 400;
            line-height: 62px;
        }
        .under-map {
            display: flex;
            align-items: center;
            justify-content: space-between;
            margin-top: 8px;
            height: 26px;
            font-size: 11px;
            color: #444;
        }
        .big-map {
            display: flex;
            align-items: center;
            box-sizing: border-box;
            width: 98px;
            height: 26px;
            padding: 0 5px 0 8px;
            justify-content: space-between;
            border: 1px solid #ddd;
            border-radius: 3px;
            font-size: 13px;
            line-height: 24px;
        }
        .notice {
            margin-top: 46px;
            color: #666;
            font-size: 16px;
            line-height: 21px;
        }
        .notice small {
            display: block;
            font-size: 14.4px;
            line-height: 20px;
        }
        .notice a {
            color: #5fa01d;
            font-weight: 700;
        }
        .section-head {
            display: flex;
            align-items: center;
            justify-content: space-between;
            margin-top: 33px;
            padding-right: 19px;
            border-bottom: 1px solid #e4e4e4;
            font-size: 20px;
            line-height: 48px;
        }
        .chips {
            display: flex;
            gap: 8px;
            margin-top: 8px;
        }
        .chip {
            display: flex;
            align-items: center;
            box-sizing: border-box;
            height: 34px;
            padding: 0 7px;
            border: 1px solid #ccc;
            border-radius: 4px;
            font-size: 14px;
            line-height: 32px;
            color: #666;
            white-space: nowrap;
        }
        .chip carrier-logo {
            width: 60px;
        }
        .details {
            display: grid;
            grid-template-columns: 504px 504px;
            grid-template-rows: 54px 49px;
            gap: 40px 16px;
            margin-top: 105px;
        }
        .detail {
            box-sizing: border-box;
            border-bottom: 1px dotted #ccc;
        }
        .detail .key {
            font-size: 12px;
            font-weight: 700;
            line-height: 18px;
        }
        .detail .value {
            margin-top: 4px;
            font-size: 16px;
            line-height: 24px;
            color: #666;
        }
        .detail.place .value {
            margin-top: 8px;
        }
        .near {
            display: flex;
            gap: 40px;
            margin-top: 102px;
        }
        .near h2 {
            margin: 0;
            font-size: 20px;
            font-weight: 400;
            line-height: 60px;
        }
        .stores {
            width: 500px;
        }
        .store {
            display: flex;
            box-sizing: border-box;
            height: 181.5px;
            padding: 0 21px 0 16px;
            border-top: 1px solid #e3e3e3;
        }
        .store:last-child {
            height: 182.5px;
            border-bottom: 1px solid #e3e3e3;
        }
        .pin {
            width: 26px;
            height: 38px;
            margin-top: 13px;
        }
        .store .body {
            flex: 1;
            padding: 21px 0 0 16px;
        }
        .store .name {
            font-size: 14px;
            line-height: 20px;
        }
        .store .address {
            margin-top: 12px;
            font-size: 12px;
            line-height: 21px;
            color: #444;
        }
        .store .far,
        .train .far {
            font-size: 12px;
            line-height: 21px;
            color: #a8a8a8;
        }
        .store .logos {
            display: grid;
            grid-template-columns: repeat(3, 96px);
            column-gap: 5.5px;
            margin: 14px 0 0 5.5px;
        }
        .arrow {
            align-self: center;
        }
        .trains {
            width: 320px;
        }
        .train {
            display: flex;
            box-sizing: border-box;
            height: 103.8px;
            padding: 13px 18px 0 16px;
            border-top: 1px solid #e6e6e6;
        }
        .train:last-child {
            height: 104.8px;
            border-bottom: 1px solid #e6e6e6;
        }
        .train .body {
            flex: 1;
            white-space: nowrap;
        }
        .train .name {
            font-size: 16px;
            line-height: 24px;
        }
        .train .line {
            margin-left: 16px;
            font-size: 13px;
            color: #666;
        }
        .train .address {
            margin-top: 15px;
            font-size: 12px;
            line-height: 21px;
            color: #666;
        }
        .go {
            width: 28px;
            padding-top: 11px;
            font-size: 8px;
            line-height: 11px;
            text-align: center;
            color: #888;
            white-space: nowrap;
        }
        .go svg {
            display: block;
            margin-bottom: 2px;
        }
        .footer {
            padding-left: 16px;
            font-size: 12px;
            line-height: 24px;
            color: #666;
        }
    `;

    store(s: (typeof stores)[number]) {
        return html`
            <div class="store">
                ${pinIcon}
                <div class="body">
                    <div class="name">${s.name}</div>
                    <div class="address">${s.address}</div>
                    <div class="far">このページの店舗から${s.km} km</div>
                    <div class="logos">
                        ${carriers.map((c) => html`<carrier-logo name=${c.id}></carrier-logo>`)}
                    </div>
                </div>
                <svg class="arrow" width="11" height="20" viewBox="0 0 11 20">
                    <path d="M.7 .7L10 10L.7 19.300" fill="none" stroke="#ced5ad" stroke-width="1.200"/>
                </svg>
            </div>
        `;
    }

    train(t: (typeof trains)[number]) {
        return html`
            <div class="train">
                <div class="body">
                    <div class="name">${t.name}<span class="line">${t.line}</span></div>
                    <div class="address">${t.address}</div>
                    <div class="far">このページのステーションから ${t.km} km</div>
                </div>
                <div class="go">
                    <svg width="28" height="28" viewBox="0 0 28 28">
                        <path d="M14 0L28 14L14 28L0 14Z" fill="#707070"/>
                        <path d="M9 18V12H15V8.500L20.500 13.200L15 17.500V14.500H11.500V18Z" fill="#fff"/>
                    </svg>
                    ルート<br />を見る
                </div>
            </div>
        `;
    }

    render() {
        return html`
            <div class="page">
                <div class="header">${brand}</div>
                <div class="content">
                    <div class="crumbs">
                        <span class="home">マップを見る</span>
                        <span class="sep">/</span>
                        <span>イズミ　ゆめタウン倉敷（ハローワーク）</span>
                    </div>
                    <h1 class="title">イズミ　ゆめタウン倉敷（ハローワーク）</h1>
                    <station-map></station-map>
                    <div class="under-map">
                        <span>Powered by GOGA</span>
                        <span class="big-map">
                            大きな地図
                            <svg width="14" height="14" viewBox="0 0 14 14">
                                <path d="M6 2H2V12H12V8M8.500 1.500H12.500V5.500M12 2L6 8" fill="none" stroke="#444" stroke-width="1.300"/>
                            </svg>
                        </span>
                    </div>
                    <div class="notice">
                        <b>毎週月曜日午前0:00〜6:00</b>の間、サーバーメンテナンスのために発送サービスがご利用出来ない時間帯があります。（受取は可）。予めご了承ください。
                        <small>(設置店舗様の休業や臨時休業、一時的な改装等により、表示結果の営業時間・営業曜日が実際と異なる場合がございます。詳しくは<a>こちら</a>)</small>
                    </div>
                    <div class="section-head">
                        使用可能な宅配業者
                        <svg width="12" height="8" viewBox="0 0 12 8">
                            <path d="M1 7L6 1.500L11 7" fill="none" stroke="#444" stroke-width="1.300"/>
                        </svg>
                    </div>
                    <div class="chips">
                        ${carriers.map((c) => html`
                            <div class="chip"><carrier-logo name=${c.id}></carrier-logo>${c.label}</div>
                        `)}
                    </div>
                    <div class="details">
                        <div class="detail place">
                            <div class="key">住所</div>
                            <div class="value">岡山県倉敷市笹沖1274-1</div>
                        </div>
                        <div class="detail">
                            <div class="key">平日に使用可能な時間</div>
                            <div class="value">9:00 ~ 21:00</div>
                        </div>
                        <div class="detail">
                            <div class="key">土曜に使用可能な時間</div>
                            <div class="value">9:00 ~ 21:00</div>
                        </div>
                        <div class="detail">
                            <div class="key">日曜・祝日に使用可能な時間</div>
                            <div class="value">9:00 ~ 21:00</div>
                        </div>
                    </div>
                    <div class="near">
                        <div class="stores">
                            <h2>近くのステーション</h2>
                            <div>${stores.map((s) => this.store(s))}</div>
                        </div>
                        <div class="trains">
                            <h2>近くの駅</h2>
                            <div>${trains.map((t) => this.train(t))}</div>
                        </div>
                    </div>
                </div>
            </div>
            <div class="footer">© 2025 Packcity Japan. All rights reserved.</div>
        `;
    }
}
